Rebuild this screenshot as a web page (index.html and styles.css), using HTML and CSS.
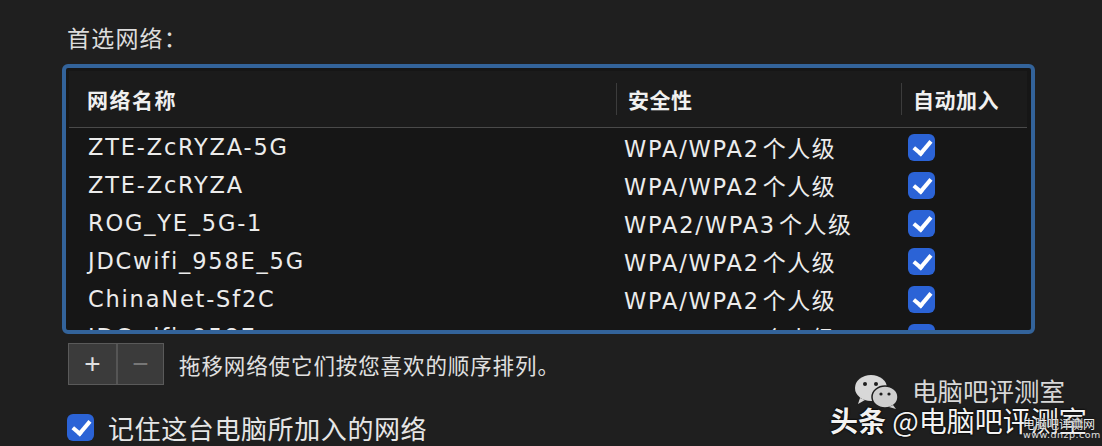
FILE: index.html
```html
<!DOCTYPE html>
<html lang="zh-CN">
<head>
    <meta charset="UTF-8">
    <title>首选网络</title>
    <link rel="stylesheet" href="styles.css">
</head>
<body>
    <div class="panel">
        <h1 class="title">首选网络：</h1>

        <div class="table-frame">
            <div class="table">
                <div class="row head">
                    <div class="cell">网络名称</div>
                    <div class="cell sep">安全性</div>
                    <div class="cell sep">自动加入</div>
                </div>
                <div class="rows" id="rows"></div>
            </div>
        </div>

        <div class="toolbar">
            <div class="seg">
                <button class="seg-btn">+</button>
                <button class="seg-btn dim">−</button>
            </div>
            <span class="hint">拖移网络使它们按您喜欢的顺序排列。</span>
        </div>

        <label class="remember">
            <span class="check"></span>
            <span>记住这台电脑所加入的网络</span>
        </label>
    </div>

    <div class="watermark">
        <div class="wm-top">
            <svg class="wechat" width="46" height="36" viewBox="0 0 46 36">
                <ellipse cx="17" cy="14" rx="16" ry="13" fill="#d8d8d8"/>
                <path d="M6 24 L4 30 L11 26 Z" fill="#d8d8d8"/>
                <ellipse cx="31" cy="23" rx="13" ry="11" fill="#cfcfcf" stroke="#1e1e1e" stroke-width="1.5"/>
                <path d="M39 31 L42 35 L35 33 Z" fill="#cfcfcf"/>
                <circle cx="11" cy="10" r="2" fill="#1e1e1e"/>
                <circle cx="22" cy="10" r="2" fill="#1e1e1e"/>
                <circle cx="27" cy="20" r="1.6" fill="#1e1e1e"/>
                <circle cx="35" cy="20" r="1.6" fill="#1e1e1e"/>
            </svg>
            <span>电脑吧评测室</span>
        </div>
        <div class="wm-bottom"><b>头条</b> @电脑吧评测室</div>
        <div class="wm-site">
            <span class="wm-small">电脑吧评测网</span>
            <span class="wm-url">www.dnzp.com</span>
        </div>
    </div>

    <script src="app.js"></script>
</body>
</html>
```

FILE: styles.css
```css
body {
    margin: 0;
    background-color: #1f1f1f;
    color: #e6e6e6;
    font-family: 'DejaVu Sans', 'Noto Sans CJK SC', sans-serif;
    width: 1102px;
    height: 446px;
    overflow: hidden;
    position: relative;
}
.panel {
    padding: 21px 0 0 62px;
}
.title {
    margin: 0 0 11px 5px;
    font-family: 'Noto Sans CJK SC', sans-serif;
    font-size: 23px;
    font-weight: normal;
    line-height: 32px;
    letter-spacing: 1.2px;
    color: #dcdcdc;
}
.table-frame {
    width: 965px;
    height: 262px;
    border: 4px solid #33639a;
    border-radius: 6px;
    background-color: #161616;
    overflow: hidden;
}
.table {
    margin: 3px 4px 0 3px;
}
.row {
    display: grid;
    grid-template-columns: 547px 285px 1fr;
    align-items: center;
}
.head {
    height: 56px;
    background-color: #1b1b1b;
    border-bottom: 1px solid #4a4a4a;
    font-family: 'Noto Sans CJK SC', sans-serif;
    font-weight: bold;
    font-size: 21px;
    color: #f0f0f0;
}
.head .cell {
    padding-left: 18px;
    letter-spacing: 1.5px;
}
.head .sep {
    border-left: 1px solid #3c3c3c;
    padding-left: 11px;
    line-height: 32px;
    letter-spacing: 0.5px;
}
.rows .row {
    height: 38px;
    font-size: 22.5px;
    letter-spacing: 1.8px;
    color: #ececec;
}
.rows .cell {
    padding-left: 19px;
}
.rows .sec {
    padding-left: 8px;
}
.rows .sec .zh {
    font-family: 'Noto Sans CJK SC', sans-serif;
    font-size: 23px;
    letter-spacing: 1.5px;
    margin-left: 3px;
}
.rows .auto {
    padding-left: 7px;
    display: flex;
}
.check {
    display: inline-block;
    width: 27px;
    height: 27px;
    border-radius: 6px;
    background-color: #2b63d6;
    position: relative;
    flex-shrink: 0;
}
.check::after {
    content: "";
    position: absolute;
    left: 9px;
    top: 3px;
    width: 7px;
    height: 14px;
    border-right: 4px solid #fff;
    border-bottom: 4px solid #fff;
    transform: rotate(40deg);
}
.toolbar {
    display: flex;
    align-items: center;
    margin: 9px 0 0 6px;
}
.seg {
    display: flex;
    border: 1px solid #5a5a5a;
    background-color: #3b3b3b;
}
.seg-btn {
    width: 47px;
    height: 40px;
    border: none;
    background: transparent;
    color: #e0e0e0;
    font-size: 28px;
    font-family: 'Liberation Sans', sans-serif;
    padding: 0;
    line-height: 40px;
}
.seg-btn + .seg-btn {
    border-left: 2px solid #555;
}
.seg-btn.dim {
    color: #777;
}
.hint {
    margin-left: 15px;
    font-family: 'Noto Sans CJK SC', sans-serif;
    font-size: 21.5px;
    letter-spacing: 0.9px;
    color: #e0e0e0;
}
.remember {
    display: flex;
    align-items: center;
    margin: 24px 0 0 5px;
    font-family: 'Noto Sans CJK SC', sans-serif;
    font-size: 26px;
    letter-spacing: 0.6px;
    color: #e6e6e6;
}
.remember .check {
    margin-right: 14px;
}
.watermark {
    position: absolute;
    left: 830px;
    top: 374px;
    font-family: 'Noto Sans CJK SC', sans-serif;
}
.wm-top {
    display: flex;
    align-items: center;
    margin-left: 24px;
    font-size: 25.5px;
    color: #d8d8d8;
    line-height: 30px;
    white-space: nowrap;
}
.wechat {
    margin-right: 12px;
}
.wm-top span {
    margin-top: -4px;
}
.wm-bottom {
    margin-top: -8px;
    font-size: 28px;
    line-height: 36px;
    color: #f2f2f2;
    white-space: nowrap;
    text-shadow: 0 0 2px #000, 0 0 2px #000;
}
.wm-bottom b {
    font-weight: bold;
}
.wm-site {
    position: absolute;
    left: 193px;
    top: 44px;
    white-space: nowrap;
    line-height: 1;
}
.wm-small {
    display: block;
    font-size: 12px;
    color: #f0f0f0;
    text-shadow: 0 0 2px #000;
}
.wm-url {
    display: block;
    font-size: 9.5px;
    color: #e0e0e0;
    letter-spacing: 0.5px;
    font-family: 'DejaVu Sans', sans-serif;
}
```

FILE: app.js
```js
const networks = [
    ['ZTE-ZcRYZA-5G', 'WPA/WPA2'],
    ['ZTE-ZcRYZA', 'WPA/WPA2'],
    ['ROG_YE_5G-1', 'WPA2/WPA3'],
    ['JDCwifi_958E_5G', 'WPA/WPA2'],
    ['ChinaNet-Sf2C', 'WPA/WPA2'],
    ['JDCwifi_958E', 'WPA/WPA2']
];

const rows = document.getElementById('rows');

networks.forEach(([name, security]) => {
    const row = document.createElement('div');
    row.className = 'row';
    row.innerHTML = `
        <div class="cell">${name}</div>
        <div class="cell sec">${security}<span class="zh">个人级</span></div>
        <div class="cell auto"><span class="check"></span></div>
    `;
    rows.appendChild(row);
});
```
